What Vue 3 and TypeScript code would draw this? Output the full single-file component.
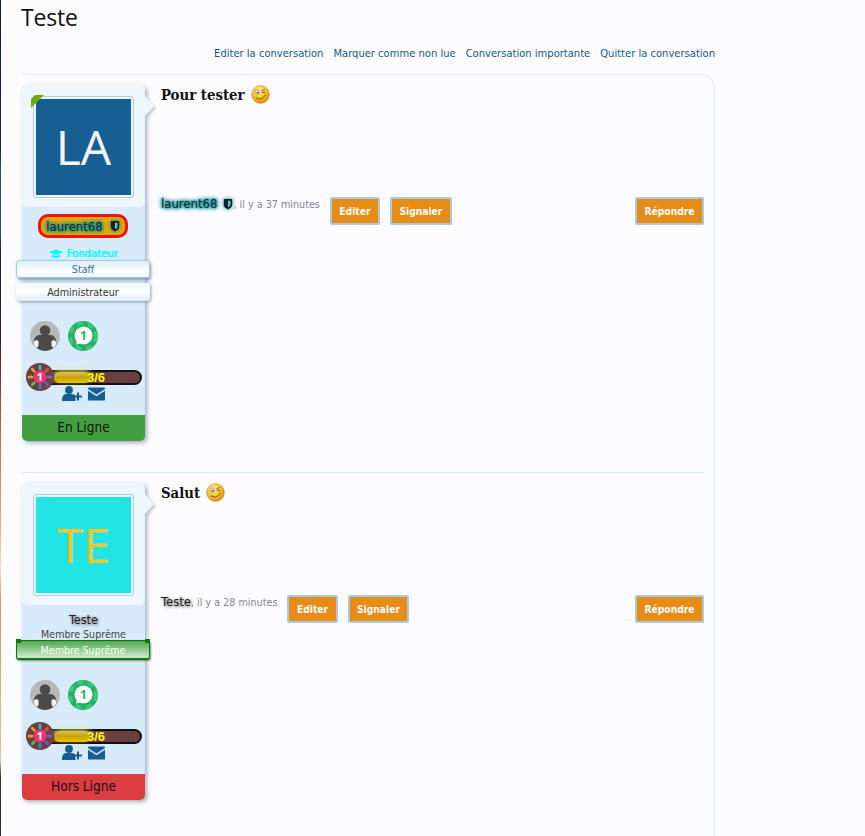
<script setup lang="ts">
interface Post {
  title: string; initials: string; avatarClass: string; name: string; time: string;
  status: string; statusClass: string; online: boolean;
}
const posts: Post[] = [
  { title: 'Pour tester', initials: 'LA', avatarClass: 'blue', name: 'laurent68', time: 'il y a 37 minutes', status: 'En Ligne', statusClass: 'on', online: true },
  { title: 'Salut', initials: 'TE', avatarClass: 'cyan', name: 'Teste', time: 'il y a 28 minutes', status: 'Hors Ligne', statusClass: 'off', online: false },
]
const links = ['Editer la conversation', 'Marquer comme non lue', 'Conversation importante', 'Quitter la conversation']
const petals = [0, 45, 90, 135, 180, 225, 270, 315]
const petalColors = ['#35b7c9', '#d8503f', '#8a5cc0', '#7a56c4', '#2f86d6', '#58b957', '#e8a02c', '#e0a02c']
</script>

<template>
  <div class="page">
    <div class="strip"></div>
    <main class="content">
      <h1 class="title">Teste</h1>
      <nav class="links"><a v-for="l in links" :key="l">{{ l }}</a></nav>
      <section class="thread">
        <article v-for="p in posts" :key="p.name" class="post">
          <aside class="user">
            <div class="avatar-box">
              <span v-if="p.online" class="corner"></span>
              <div class="avatar" :class="p.avatarClass">{{ p.initials }}</div>
            </div>
            <div class="arrow"></div>
            <div class="identity">
              <template v-if="p.online">
                <div class="pill"><span class="uname glow">laurent68</span><svg class="shield" viewBox="0 0 12 14"><path d="M1 1h10v7c0 3-3 4.500-5 5.500C4 12.500 1 11 1 8z" fill="#123" /><path d="M6 3h3v5c0 1.500-2 2.500-3 3z" fill="#5cc" /></svg></div>
                <div class="rank-line"><svg class="cap" viewBox="0 0 16 12"><path d="M8 1 16 4.500 8 8 0 4.500z" fill="#0ff" /><path d="M3.500 7v3c2 1.500 7 1.500 9 0V7L8 9z" fill="#0ff" /></svg>Fondateur</div>
                <div class="ribbon staff">Staff</div>
                <div class="ribbon admin">Administrateur</div>
              </template>
              <template v-else>
                <div class="uname plain">Teste</div>
                <div class="sub">Membre Suprême</div>
                <div class="ribbon member">Membre Suprême</div>
              </template>
            </div>
            <div class="badges">
              <svg class="badge" viewBox="0 0 30 30">
                <circle cx="15" cy="15" r="15" fill="#b8b8b8" />
                <circle cx="15" cy="9.500" r="5.300" fill="#4a4a4a" />
                <path d="M3.500 23c0-6 3-9 6-9h11c3 0 6 3 6 9-1 2-2 3-4 4.500-2 1.500-5 2.500-7.500 2.500s-5.500-1-7.500-2.500C5.500 26 4.500 25 3.500 23z" fill="#4a4a4a" />
                <path d="M3.500 21l2.500-2 2.500 1v5l-2 2-2.500-3zM26.500 21l-2.500-2-2.500 1v5l2 2 2.500-3z" fill="#f4f4f4" />
              </svg>
              <svg class="badge" viewBox="0 0 30 30">
                <circle cx="15" cy="15" r="15" fill="#23b263" />
                <circle cx="15" cy="15" r="13" fill="none" stroke="#3cc97c" stroke-width="4" stroke-dasharray="6 5" />
                <circle cx="15.500" cy="14.500" r="9" fill="#fff" />
                <path d="M8 23.500l1.500-6 5 4.500z" fill="#fff" />
                <text x="15.500" y="19" text-anchor="middle" class="badge-num">1</text>
              </svg>
            </div>
            <div class="level">
              <div class="bar">
                <div class="fill"></div>
                <span class="bar-text">3/6</span>
              </div>
              <svg class="level-icon" viewBox="0 0 28 28">
                <circle cx="14" cy="14" r="14" fill="#6d4040" />
                <ellipse v-for="(a, i) in petals" :key="a" cx="14" cy="4.500" rx="1.500" ry="3" :fill="petalColors[i]" :transform="`rotate(${a} 14 14)`" />
                <circle cx="14" cy="14" r="6.500" fill="#ea3577" />
                <text x="14" y="17.800" text-anchor="middle" class="level-num">1</text>
              </svg>
            </div>
            <div class="actions">
              <svg class="add" viewBox="0 0 20 15"><circle cx="7" cy="4" r="3.900" fill="#155e92" /><path d="M0 15c0-5 1.500-7 4-7h6c2 0 3 1 3.500 2.500V15z" fill="#155e92" /><path d="M15 6.500h2v3h3v2h-3v3h-2v-3h-3v-2h3z" fill="#155e92" /></svg>
              <svg class="mail" viewBox="0 0 18 14"><path d="M1 0h16a1 1 0 0 1 1 1v.7L9 7.500 0 1.700V1a1 1 0 0 1 1-1z" fill="#155e92" /><path d="M0 3.500l9 5.800 9-5.800V13a1 1 0 0 1-1 1H1a1 1 0 0 1-1-1z" fill="#155e92" /></svg>
            </div>
            <div class="status" :class="p.statusClass">{{ p.status }}</div>
          </aside>
          <div class="body">
            <h2 class="post-title">{{ p.title }}
              <svg class="smiley" viewBox="0 0 20 20">
                <defs><radialGradient id="sm" cx="40%" cy="30%" r="75%"><stop offset="0" stop-color="#fff2a0" /><stop offset=".5" stop-color="#fbc62b" /><stop offset="1" stop-color="#d98a0c" /></radialGradient></defs>
                <circle cx="10" cy="10" r="9.300" fill="url(#sm)" stroke="#b87a10" stroke-width=".6" />
                <circle cx="6.500" cy="7.500" r="2.300" fill="#fff" stroke="#7a5410" stroke-width=".6" />
                <circle cx="7" cy="8" r="1" fill="#222" />
                <path d="M11 6.500 14.500 4.500M11.500 8 15 7.500" stroke="#7a5410" stroke-width="1" fill="none" />
                <path d="M5 13c3 3 8 2 10-3" stroke="#7a5410" stroke-width="1" fill="none" />
              </svg>
            </h2>
            <div class="post-foot">
              <div class="meta">
                <span v-if="p.online" class="author glow">laurent68<svg class="shield small" viewBox="0 0 12 14"><path d="M1 1h10v7c0 3-3 4.500-5 5.500C4 12.500 1 11 1 8z" fill="#123" /><path d="M6 3h3v5c0 1.500-2 2.500-3 3z" fill="#5cc" /></svg></span>
                <span v-else class="author plain">Teste</span><span class="time">, {{ p.time }}</span>
              </div>
              <button class="btn">Editer</button>
              <button class="btn">Signaler</button>
              <button class="btn reply">Répondre</button>
            </div>
          </div>
        </article>
      </section>
    </main>
  </div>
</template>

<style>
html, body { margin: 0; background: #fcfcff; overflow: hidden; }
</style>

<style scoped>
* { box-sizing: border-box; }
.page { display: flex; width: 865px; height: 836px; overflow: hidden; font-family: "DejaVu Sans Condensed", "DejaVu Sans", sans-serif; background: #fcfcff; }
.strip { width: 1px; flex: none; background: linear-gradient(#101a40 0, #14224f 18%, #2a4a9a 20%, #2a4a9a 28%, #1e1e38 30%, #301a28 40%, #8a3a30 46%, #c86a45 52%, #e8a868 62%, #f2e0c8 68%, #c99a55 72%, #e0b878 85%, #d8c8a8 91%, #3a3028 93%, #2a2a2a 100%); }
.content { width: 694px; margin-left: 20px; flex: none; }
.title { margin: 0; height: 46px; padding-top: 2px; font: 400 23px/30px "Open Sans", sans-serif; letter-spacing: -.2px; color: #111; }
.links { display: flex; justify-content: flex-end; gap: 10px; height: 28px; padding-top: 1px; font-size: 11.100px; line-height: 14px; color: #155a8a; }
.thread { border: 1px solid #d9edfb; border-width: 1px 1px 0 0; border-radius: 0 14px 0 0; height: 762px; padding: 10px 10px 0 0; }
.post { display: flex; align-items: flex-start; padding-bottom: 31px; }
.post + .post { border-top: 1px solid #d9edfb; padding-top: 10px; }
.user { position: relative; width: 123px; margin-left: 1px; flex: none; background: #d7ebfb; border-radius: 5px; box-shadow: 2px 2px 4px rgba(90,110,130,.55); display: flex; flex-direction: column; align-items: center; }
.avatar-box { position: relative; align-self: stretch; height: 122px; padding: 11px 0 0 11px; background: #eff7fe; border-radius: 5px; }
.corner { position: absolute; left: 9px; top: 10px; width: 13px; height: 13px; background: #7aa80c; clip-path: polygon(0 30%, 30% 0, 100% 0, 0 100%); }
.avatar { width: 101px; height: 102px; border: 1px solid #a9cde8; border-radius: 3px; padding: 2px; background-clip: content-box; display: flex; align-items: center; justify-content: center; font: 400 48px/1 "Open Sans", sans-serif; }
.avatar.blue { background-color: #175f93; color: #f2f7fb; }
.avatar.cyan { background-color: #23e4e4; color: #f7c72e; }
.arrow { position: absolute; left: 123px; top: 11px; width: 0; height: 0; border-top: 10px solid transparent; border-bottom: 10px solid transparent; border-left: 9px solid #eff7fe; filter: drop-shadow(2px 2px 1px rgba(120,140,160,.4)); }
.identity { align-self: stretch; display: flex; flex-direction: column; align-items: center; padding: 7px 0 20px; font-size: 11px; }
.pill { height: 24px; width: 90px; margin-left: -1px; border: 3px solid #ef1108; border-radius: 10px; background: #e3a90c; display: flex; align-items: center; justify-content: center; gap: 7px; }
.uname { font-size: 13px; }
.glow { color: #0a2a38; text-shadow: 0 0 3px #0d8f8f, 0 0 3px #0d8f8f, 0 0 4px #0d8f8f, 0 0 5px #0d8f8f; }
.plain { color: #222; text-shadow: 1px 1px 3px #555; }
.shield { width: 10px; height: 12px; flex: none; filter: drop-shadow(0 0 2px #0a7a7a); }
.shield.small { margin-left: 6px; vertical-align: -2px; }
.rank-line { margin-top: 8px; height: 14px; display: flex; align-items: center; gap: 4px; color: #0ff; font-size: 11.200px; text-shadow: 0 0 1px #0ff; }
.cap { width: 14px; height: 11px; }
.ribbon { position: relative; width: 134px; height: 18px; flex: none; align-self: flex-start; margin-left: -6px; display: flex; align-items: center; justify-content: center; font-size: 10.700px; border-radius: 3px; }
.staff { background: linear-gradient(#dfeffc, #fff 60%, #eef6fd); color: #2d6a9f; border: 1px solid #a4cbe6; box-shadow: 1px 2px 3px rgba(100,120,140,.7); }
.admin { margin-top: 5px; background: linear-gradient(#f2f6fb, #fff 50%, #dbe9f6); color: #333; box-shadow: 1px 1px 3px rgba(100,120,140,.7); }
.identity > .uname { height: 16px; line-height: 16px; font-size: 12.500px; }
.sub { font-size: 10.600px; line-height: 13px; color: #444; }
.member { margin-top: -1px; height: 20px; background: linear-gradient(#4ea84e, #d5ecd3); color: #fff; font-size: 10.600px; border: 1px solid #0a7a0a; border-bottom-width: 2px; box-shadow: 1px 1px 2px rgba(60,80,60,.6); }
.member::before { content: ""; position: absolute; top: -2px; left: -1px; right: -1px; height: 4px; border-left: 5px solid #0a7a0a; border-right: 5px solid #0a7a0a; }
.badges { align-self: flex-start; display: flex; gap: 8px; margin-left: 8px; height: 42px; }
.badge { width: 30px; height: 30px; }
.badge-num { font: 700 12px "Open Sans", sans-serif; fill: #23b263; }
.level { position: relative; align-self: stretch; height: 23px; }
.bar { position: absolute; left: 25px; top: 7px; width: 95px; height: 15px; background: #6a3f3f; border: 2px solid #111; border-left: 0; border-radius: 0 8px 8px 0; }
.fill { position: absolute; left: 7px; top: 0; width: 36px; height: 11px; background: linear-gradient(#d8c25a, #c9a200 50%, #e5c800); border-radius: 6px; box-shadow: 0 -2px 6px rgba(240,235,110,.8); }
.bar-text { position: absolute; left: 40px; top: -2px; font: 700 13px/15px "Liberation Sans", sans-serif; color: #ff0; }
.level-icon { position: absolute; left: 4px; top: 0; width: 28px; height: 28px; }
.level-num { font: 700 11px "Open Sans", sans-serif; fill: #fff; }
.actions { position: relative; display: flex; gap: 6px; height: 15px; align-items: center; }
.add { width: 20px; height: 15px; }
.mail { width: 17px; height: 14px; }
.status { margin-top: 14px; align-self: stretch; height: 26px; text-align: center; font-size: 13.500px; line-height: 25px; color: #111; border-radius: 0 0 5px 5px; }
.on { background: #439e3f; }
.off { background: #dc3d40; }
.body { flex: 1; margin-left: 16px; display: flex; flex-direction: column; }
.post-title { margin: 0; height: 112px; font: 700 14.800px/20px "DejaVu Serif Condensed", "DejaVu Serif", serif; color: #111; display: flex; align-items: flex-start; gap: 6px; }
.smiley { width: 19px; height: 19px; }
.post-foot { display: flex; align-items: flex-start; gap: 10px; }
.meta { font-size: 10.700px; line-height: 14px; }
.author { font-size: 13px; }
.time { color: #85858f; }
.btn { height: 28px; padding: 0 7.500px; font-family: inherit; font-size: 10.200px; font-weight: 700; color: #fff; background: #e68c17; border: 2px solid #a5cbe3; border-radius: 2px; }
.reply { margin-left: auto; }
</style>
